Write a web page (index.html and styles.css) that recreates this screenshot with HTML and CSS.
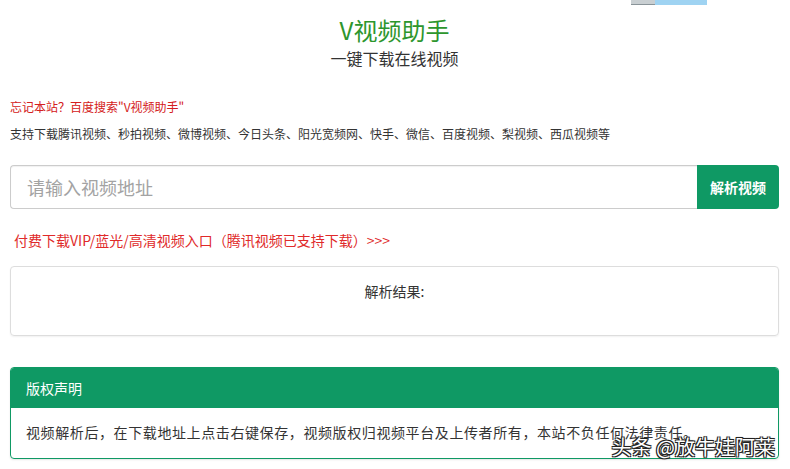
FILE: index.html
```
<!DOCTYPE html>
<html lang="zh-CN">
<head>
<meta charset="utf-8">
<title>V视频助手</title>
<link rel="stylesheet" href="styles.css">
</head>
<body>
<div class="topbar"><span class="tb-grey"></span><span class="tb-blue"></span></div>
<div class="page">
  <header class="head">
    <h1 class="title">V视频助手</h1>
    <p class="subtitle">一键下载在线视频</p>
  </header>
  <p class="remind">忘记本站？百度搜索"V视频助手"</p>
  <p class="support">支持下载腾讯视频、秒拍视频、微博视频、今日头条、阳光宽频网、快手、微信、百度视频、梨视频、西瓜视频等</p>
  <form class="search">
    <input class="search-input" type="text" placeholder="请输入视频地址">
    <button class="search-btn" type="button">解析视频</button>
  </form>
  <a class="vip" href="#">付费下载VIP/蓝光/高清视频入口（腾讯视频已支持下载）&gt;&gt;&gt;</a>
  <div class="result">解析结果:</div>
  <section class="panel">
    <div class="panel-head">版权声明</div>
    <div class="panel-body">视频解析后，在下载地址上点击右键保存，视频版权归视频平台及上传者所有，本站不负任何法律责任。</div>
  </section>
</div>
<div class="watermark">头条 @放牛娃阿莱</div>
</body>
</html>
```
FILE: styles.css
```
* { box-sizing: border-box; }
html, body { margin: 0; padding: 0; background: #fff; }
body {
  font-family: "Noto Sans CJK SC", "Noto Sans", "Liberation Sans", sans-serif;
  color: #333;
  font-size: 12px;
  width: 790px;
  height: 469px;
  overflow: hidden;
  position: relative;
}
.topbar {
  position: absolute;
  left: 631px;
  top: 0;
  display: flex;
  height: 5px;
}
.tb-grey { width: 24px; background: #c9cfd2; border-bottom: 1px solid #8a9499; }
.tb-blue { width: 52px; background: #9fd3f2; }
.page { padding: 0 11px 0 10px; }
.head { margin-top: 15px; text-align: center; }
.title {
  margin: 0;
  font-size: 24px;
  line-height: 30px;
  font-weight: normal;
  color: #2d962d;
}
.subtitle {
  margin: 1px 0 0;
  font-size: 16px;
  line-height: 24px;
  color: #333;
}
.remind {
  margin: 27px 0 0;
  line-height: 20px;
  font-size: 12px;
  color: #d42020;
}
.support {
  margin: 7px 0 0;
  line-height: 20px;
  font-size: 12px;
  color: #333;
}
.search {
  margin: 21px 0 0;
  display: flex;
  height: 44px;
}
.search-input {
  flex: 1;
  height: 44px;
  margin: 0;
  border: 1px solid #ccc;
  border-right: none;
  border-radius: 4px 0 0 4px;
  padding: 0 16px;
  font-family: inherit;
  font-size: 18px;
  color: #555;
  outline: none;
  box-shadow: inset 0 1px 1px rgba(0,0,0,0.06);
}
.search-input::placeholder { color: #a3a3a3; }
.search-btn {
  width: 82px;
  height: 44px;
  margin: 0;
  border: none;
  border-radius: 0 4px 4px 0;
  background: #0f9964;
  color: #fff;
  font-family: inherit;
  font-size: 14px;
  font-weight: bold;
  padding: 0;
}
.vip {
  display: block;
  margin: 21px 0 0 4px;
  line-height: 20px;
  font-size: 14px;
  color: #e02a2a;
  text-decoration: none;
}
.result {
  margin-top: 16px;
  height: 70px;
  border: 1px solid #ddd;
  border-radius: 4px;
  box-shadow: 0 1px 2px rgba(0,0,0,0.06);
  padding-top: 14px;
  text-align: center;
  line-height: 20px;
  font-size: 14px;
  color: #333;
}
.panel {
  margin-top: 31px;
  border: 1px solid #0f9964;
  border-radius: 4px;
  overflow: hidden;
  box-shadow: 0 1px 2px rgba(0,0,0,0.1);
}
.panel-head {
  height: 40px;
  background: #0f9964;
  color: #fff;
  font-size: 14px;
  font-weight: normal;
  line-height: 40px;
  padding-left: 15px;
}
.panel-body {
  height: 50px;
  padding: 14px 0 0 15px;
  font-size: 14px;
  letter-spacing: 0.6px;
  line-height: 20px;
  color: #333;
  white-space: nowrap;
}
.watermark {
  position: absolute;
  right: 15px;
  top: 433px;
  font-size: 20px;
  line-height: 28px;
  color: #fff;
  text-shadow: -1px -1px 0 #222, 1px -1px 0 #222, -1px 1px 0 #222, 1px 1px 0 #222, 0 0 2px #000;
}
```
